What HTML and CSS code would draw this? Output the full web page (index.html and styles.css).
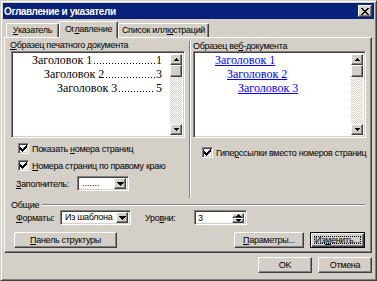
FILE: index.html
```html
<!DOCTYPE html>
<html lang="ru">
<head>
    <meta charset="UTF-8">
    <title>Оглавление и указатели</title>
    <link rel="stylesheet" href="styles.css">
</head>
<body>
<div class="window">
    <div class="titlebar">
        <span class="title">Оглавление и указатели</span>
        <span class="close-btn raised">
            <svg width="8" height="7" viewBox="0 0 8 7" shape-rendering="crispEdges"><path d="M0 0h2v1H0zM6 0h2v1H6zM1 1h2v1H1zM5 1h2v1H5zM2 2h4v1H2zM3 3h2v1H3zM2 4h4v1H2zM1 5h2v1H1zM5 5h2v1H5zM0 6h2v1H0zM6 6h2v1H6z"/></svg>
        </span>
    </div>

    <div class="tabs">
        <div class="tab tab-index"><u>У</u>казатель</div>
        <div class="tab tab-toc active">Ог<u>л</u>авление</div>
        <div class="tab tab-figures">Список илл<u>ю</u>страций</div>
    </div>

    <div class="panel">
        <div class="samples">
            <!-- printed document sample -->
            <div class="sample print-sample">
                <div class="caption"><u>О</u>бразец печатного документа</div>
                <div class="preview sunken">
                    <div class="preview-text">
                        <div class="toc-line lvl1"><span>Заголовок 1</span><span class="leader"></span><span>1</span></div>
                        <div class="toc-line lvl2"><span>Заголовок 2</span><span class="leader"></span><span>3</span></div>
                        <div class="toc-line lvl3"><span>Заголовок 3</span><span class="leader"></span><span>5</span></div>
                    </div>
                    <div class="vscroll">
                        <span class="sb-btn raised"><svg width="5" height="3" viewBox="0 0 5 3" shape-rendering="crispEdges"><path d="M2 0h1v1H2zM1 1h3v1H1zM0 2h5v1H0z"/></svg></span>
                        <span class="sb-thumb raised"></span>
                        <span class="sb-track"></span>
                        <span class="sb-btn raised"><svg width="5" height="3" viewBox="0 0 5 3" shape-rendering="crispEdges"><path d="M0 0h5v1H0zM1 1h3v1H1zM2 2h1v1H2z"/></svg></span>
                    </div>
                </div>
                <div class="check">
                    <span class="box sunken"><svg width="7" height="7" viewBox="0 0 7 7" shape-rendering="crispEdges"><path d="M6 0h1v1H6zM5 1h2v1H5zM0 2h1v1H0zM4 2h3v1H4zM0 3h2v1H0zM3 3h3v1H3zM0 4h5v1H0zM1 5h3v1H1zM2 6h1v1H2z"/></svg></span>
                    <span>Показать <u>н</u>омера страниц</span>
                </div>
                <div class="check">
                    <span class="box sunken"><svg width="7" height="7" viewBox="0 0 7 7" shape-rendering="crispEdges"><path d="M6 0h1v1H6zM5 1h2v1H5zM0 2h1v1H0zM4 2h3v1H4zM0 3h2v1H0zM3 3h3v1H3zM0 4h5v1H0zM1 5h3v1H1zM2 6h1v1H2z"/></svg></span>
                    <span><u>Н</u>омера страниц по правому краю</span>
                </div>
                <div class="field-row">
                    <span class="field-label leader-label"><u>З</u>аполнитель:</span>
                    <div class="combo combo-leader sunken">
                        <span class="combo-value dots">.......</span>
                        <span class="combo-btn raised"><svg width="7" height="4" viewBox="0 0 7 4" shape-rendering="crispEdges"><path d="M0 0h7v1H0zM1 1h5v1H1zM2 2h3v1H2zM3 3h1v1H3z"/></svg></span>
                    </div>
                </div>
            </div>

            <!-- web document sample -->
            <div class="sample web-sample">
                <div class="caption">Образец ве<u>б</u>-документа</div>
                <div class="preview sunken">
                    <div class="preview-text">
                        <div class="web-line lvl1"><a>Заголовок 1</a></div>
                        <div class="web-line lvl2"><a>Заголовок 2</a></div>
                        <div class="web-line lvl3"><a>Заголовок 3</a></div>
                    </div>
                    <div class="vscroll">
                        <span class="sb-btn raised"><svg width="5" height="3" viewBox="0 0 5 3" shape-rendering="crispEdges"><path d="M2 0h1v1H2zM1 1h3v1H1zM0 2h5v1H0z"/></svg></span>
                        <span class="sb-thumb raised"></span>
                        <span class="sb-track"></span>
                        <span class="sb-btn raised"><svg width="5" height="3" viewBox="0 0 5 3" shape-rendering="crispEdges"><path d="M0 0h5v1H0zM1 1h3v1H1zM2 2h1v1H2z"/></svg></span>
                    </div>
                </div>
                <div class="check">
                    <span class="box sunken"><svg width="7" height="7" viewBox="0 0 7 7" shape-rendering="crispEdges"><path d="M6 0h1v1H6zM5 1h2v1H5zM0 2h1v1H0zM4 2h3v1H4zM0 3h2v1H0zM3 3h3v1H3zM0 4h5v1H0zM1 5h3v1H1zM2 6h1v1H2z"/></svg></span>
                    <span>Гипе<u>р</u>ссылки вместо номеров страниц</span>
                </div>
            </div>
        </div>

        <div class="general">
            <div class="group-title"><span>Общие</span></div>
            <div class="formats-row">
                <span class="field-label formats-label"><u>Ф</u>орматы:</span>
                <div class="combo combo-formats sunken">
                    <span class="combo-value">Из шаблона</span>
                    <span class="combo-btn raised"><svg width="7" height="4" viewBox="0 0 7 4" shape-rendering="crispEdges"><path d="M0 0h7v1H0zM1 1h5v1H1zM2 2h3v1H2zM3 3h1v1H3z"/></svg></span>
                </div>
                <span class="field-label levels-label">Уро<u>в</u>ни:</span>
                <div class="spinner sunken">
                    <span class="spin-value">3</span>
                    <span class="spin-btns">
                        <span class="spin-btn raised"><svg width="5" height="3" viewBox="0 0 5 3" shape-rendering="crispEdges"><path d="M2 0h1v1H2zM1 1h3v1H1zM0 2h5v1H0z"/></svg></span>
                        <span class="spin-btn raised"><svg width="5" height="3" viewBox="0 0 5 3" shape-rendering="crispEdges"><path d="M0 0h5v1H0zM1 1h3v1H1zM2 2h1v1H2z"/></svg></span>
                    </span>
                </div>
            </div>
            <div class="buttons-row">
                <span class="btn raised btn-outline"><u>П</u>анель структуры</span>
                <span class="spacer"></span>
                <span class="btn raised btn-params"><u>П</u>араметры...</span>
                <span class="btn btn-focused btn-modify"><span class="focus-rect">Из<u>м</u>енить...</span></span>
            </div>
        </div>
    </div>

    <div class="footer">
        <span class="btn raised btn-ok">OK</span>
        <span class="btn raised btn-cancel">Отмена</span>
    </div>
</div>
</body>
</html>
```

FILE: styles.css
```css
/* Classic Windows dialog look */
body {
    margin: 0;
    font-family: "Liberation Sans", Arial, sans-serif;
    font-size: 9px;
    letter-spacing: -0.3px;
    color: #000;
    background: #d4d0c8;
}

u {
    text-decoration: underline;
    text-underline-offset: 1px;
}

.raised {
    background: #d4d0c8;
    border: 1px solid;
    border-color: #fff #404040 #404040 #fff;
    box-shadow: inset -1px -1px #808080;
    box-sizing: border-box;
}

.sunken {
    background: #fff;
    border: 1px solid;
    border-color: #808080 #fff #fff #808080;
    box-shadow: inset 1px 1px #404040, inset -1px -1px #d4d0c8;
    box-sizing: border-box;
}

.window {
    width: 377px;
    height: 281px;
    box-sizing: border-box;
    background: #d4d0c8;
    border: 1px solid;
    border-color: #d4d0c8 #404040 #404040 #d4d0c8;
    box-shadow: inset 1px 1px #fff, inset -1px -1px #808080;
    padding: 2px;
    display: flex;
    flex-direction: column;
}

/* Title bar */
.titlebar {
    height: 16px;
    background: #08217a;
    color: #fff;
    display: flex;
    align-items: center;
    justify-content: space-between;
    padding: 0 2px 0 1px;
    flex-shrink: 0;
}

.title {
    font-weight: bold;
    font-size: 10px;
    letter-spacing: -0.4px;
}

.close-btn {
    width: 14px;
    height: 12px;
    display: flex;
    align-items: center;
    justify-content: center;
}

/* Tabs */
.tabs {
    display: flex;
    align-items: flex-end;
    height: 18px;
    padding-left: 3px;
    position: relative;
    z-index: 1;
}

.tab {
    height: 14px;
    box-sizing: border-box;
    border-top: 1px solid #fff;
    border-left: 1px solid #fff;
    border-right: 1px solid #404040;
    box-shadow: inset -1px 0 #808080;
    border-radius: 2px 2px 0 0;
    text-align: center;
    line-height: 13px;
    background: #d4d0c8;
    white-space: nowrap;
}

.tab-index { width: 53px; }
.tab-figures { width: 91px; }

.tab.active {
    width: 59px;
    height: 17px;
    margin-bottom: -1px;
    line-height: 15px;
}

/* Tab panel */
.panel {
    width: 368px;
    height: 216px;
    margin-left: 1px;
    box-sizing: border-box;
    border: 1px solid;
    border-color: #fff #404040 #404040 #fff;
    box-shadow: inset -1px -1px #808080;
    display: flex;
    flex-direction: column;
}

.samples {
    display: flex;
    height: 158px;
    padding-top: 2px;
}

.sample {
    display: flex;
    flex-direction: column;
}

.print-sample {
    width: 176px;
    padding-left: 5px;
    margin-right: 4px;
}

.web-sample {
    flex: 1;
    border-left: 1px solid #808080;
    box-shadow: inset 1px 0 #fff;
    padding-left: 3px;
    padding-right: 6px;
    margin-top: 1px;
}

.caption {
    height: 11px;
    line-height: 11px;
    white-space: nowrap;
}

.web-sample .caption {
    height: 10px;
}

.preview {
    height: 87px;
    display: flex;
}

.print-sample .preview {
    width: 174px;
    margin-left: 1px;
}

.preview-text {
    flex: 1;
    padding-top: 1px;
    font-family: "Liberation Serif", "Times New Roman", serif;
    font-size: 12px;
    letter-spacing: 0;
    line-height: 14px;
}

.toc-line {
    display: flex;
    padding-right: 8px;
}

.toc-line.lvl1 { padding-left: 20px; }
.toc-line.lvl2 { padding-left: 32px; }
.toc-line.lvl3 { padding-left: 45px; }

.leader {
    flex: 1;
    margin: 0 1px 3px 2px;
    background: linear-gradient(to right, #000 1px, transparent 1px) 0 100% / 3px 1px repeat-x;
}

.web-line a {
    color: #0000ff;
    text-decoration: underline;
}

.web-line.lvl1 { padding-left: 21px; }
.web-line.lvl2 { padding-left: 33px; }
.web-line.lvl3 { padding-left: 44px; }

/* Scrollbar */
.vscroll {
    width: 12px;
    display: flex;
    flex-direction: column;
    margin: 2px 2px 2px 0;
}

.sb-btn {
    height: 11px;
    display: flex;
    align-items: center;
    justify-content: center;
}

.sb-thumb {
    height: 12px;
}

.sb-track {
    flex: 1;
    background: repeating-conic-gradient(#fff 0 25%, #d4d0c8 0 50%) 0 0 / 2px 2px;
}

/* Checkboxes */
.check {
    display: flex;
    align-items: center;
    height: 13px;
    white-space: nowrap;
}

.print-sample .check {
    margin-top: 4px;
    padding-left: 8px;
}

.print-sample .check:first-of-type {
    margin-top: 8px;
}

.web-sample .check {
    margin-top: 8px;
    padding-left: 9px;
}

.check .box {
    width: 11px;
    height: 11px;
    margin-right: 3px;
    display: flex;
    align-items: center;
    justify-content: center;
    flex-shrink: 0;
}

/* Combos */
.field-row {
    display: flex;
    align-items: center;
    margin-top: 4px;
    padding-left: 6px;
}

.field-label {
    white-space: nowrap;
}

.leader-label {
    width: 61px;
}

.combo {
    height: 15px;
    display: flex;
    align-items: center;
    padding: 2px;
}

.combo-leader {
    width: 52px;
}

.combo-value {
    flex: 1;
    padding-left: 2px;
    white-space: nowrap;
    overflow: hidden;
    line-height: 11px;
}

.combo-value.dots {
    letter-spacing: 0;
}

.combo-btn {
    width: 12px;
    height: 11px;
    display: flex;
    align-items: center;
    justify-content: center;
}

/* General group */
.general {
    display: flex;
    flex-direction: column;
    padding: 0 6px 0 6px;
}

.group-title {
    display: flex;
    align-items: center;
    height: 11px;
    margin-top: 1px;
}

.group-title::after {
    content: "";
    flex: 1;
    height: 0;
    margin-left: 3px;
    border-top: 1px solid #808080;
    border-bottom: 1px solid #fff;
}

.formats-row {
    display: flex;
    align-items: center;
    height: 15px;
    padding-left: 5px;
}

.formats-label {
    width: 44px;
}

.combo-formats {
    width: 71px;
}

.levels-label {
    width: 49px;
    margin-left: 14px;
}

.spinner {
    width: 53px;
    height: 15px;
    display: flex;
    padding: 2px;
}

.spin-value {
    flex: 1;
    line-height: 11px;
    padding-left: 1px;
}

.spin-btns {
    display: flex;
    flex-direction: column;
    width: 12px;
}

.spin-btn {
    flex: 1;
    display: flex;
    align-items: center;
    justify-content: center;
}

.buttons-row {
    display: flex;
    margin-top: 7px;
    padding-left: 3px;
}

.spacer {
    flex: 1;
}

/* Push buttons */
.btn {
    height: 16px;
    display: flex;
    align-items: center;
    justify-content: center;
    white-space: nowrap;
    box-sizing: border-box;
}

.btn-outline { width: 103px; }
.btn-params { width: 70px; }

.btn-modify {
    width: 55px;
    margin-left: 6px;
}

.btn-focused {
    border: 1px solid #000;
    box-shadow: inset 1px 1px #fff, inset -1px -1px #404040, inset -2px -2px #808080;
    padding: 3px;
}

.focus-rect {
    flex: 1;
    align-self: stretch;
    display: flex;
    align-items: center;
    justify-content: center;
    outline: 1px dotted #000;
    outline-offset: -1px;
}

.footer {
    display: flex;
    justify-content: flex-end;
    margin-top: 4px;
    padding-right: 2px;
}

.btn-ok,
.btn-cancel {
    width: 54px;
}

.btn-cancel {
    margin-left: 6px;
}
```
